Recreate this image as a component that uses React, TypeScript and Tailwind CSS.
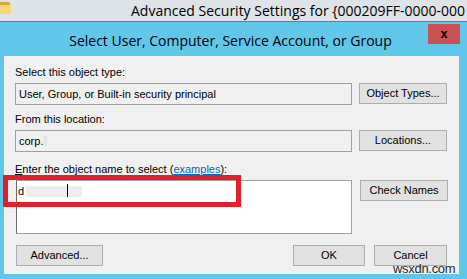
import React from "react";

const ui = { fontFamily: '"Liberation Sans", Arial, sans-serif' };
const chrome = { fontFamily: '"Open Sans", "Noto Sans", sans-serif' };

const Btn = ({ label, w }: { label: string; w: string }) => (
  <div
    className={`${w} h-[21px] flex items-center justify-center border border-[#adadad] bg-[#e1e1e1] text-[11px] text-black`}
  >
    {label}
  </div>
);

export default function App() {
  return (
    <div className="w-[467px] h-[279px] overflow-hidden flex flex-col relative" style={ui}>
      {/* parent window strip */}
      <div className="h-[22px] flex items-center bg-[#dde3e7] border-b border-[#707880] shrink-0 overflow-hidden">
        <svg width="12" height="16" viewBox="0 0 12 16" className="mt-[-6px] shrink-0">
          <rect x="-4" y="2" width="14" height="12" rx="1" fill="#d9a93c" />
          <rect x="-4" y="5" width="15" height="9" rx="1" fill="#f3d57c" />
        </svg>
        <span className="ml-[119px] shrink-0 text-[14px] text-black whitespace-nowrap" style={chrome}>
          Advanced Security Settings for {"{"}000209FF-0000-000
        </span>
      </div>

      {/* dialog */}
      <div className="flex-1 flex flex-col bg-[#60c6ea] pl-[4px] pr-[8px] pb-[5px]">
        <div className="h-[34px] flex items-start shrink-0 -mr-[8px] -ml-[4px]">
          <div
            className="flex-1 pl-[33px] pt-[8px] text-center text-[14px] text-black whitespace-nowrap"
            style={chrome}
          >
            Select User, Computer, Service Account, or Group
          </div>
          <div className="w-[32px] h-[20px] mt-[2px] mr-[7px] bg-[#c75050] flex items-center justify-center shrink-0">
            <span className="text-[12px] font-bold text-black leading-none" style={ui}>x</span>
          </div>
        </div>

        <div className="flex-1 bg-[#f0f0f0] pl-[11px] pr-[12px] pt-[10px] text-[11px] text-black">
          <div className="h-[13px] leading-[13px]">Select this object type:</div>
          <div className="mt-[4px] grid grid-cols-[337px_88px] gap-x-[7px]">
            <div className="h-[22px] border border-[#a0a0a0] bg-[#f0f0f0] flex items-center px-[3px]">
              User, Group, or Built-in security principal
            </div>
            <Btn label="Object Types..." w="w-[88px]" />
          </div>

          <div className="mt-[8px] h-[13px] leading-[13px]">From this location:</div>
          <div className="mt-[4px] grid grid-cols-[337px_88px] gap-x-[7px]">
            <div className="h-[22px] border border-[#a0a0a0] bg-[#f0f0f0] flex items-center px-[3px]">
              corp.
              <span className="ml-[1px] w-[3px] h-[10px] bg-[#e4e4e4]" />
            </div>
            <Btn label="Locations..." w="w-[88px]" />
          </div>

          <div className="mt-[11px] h-[13px] leading-[13px]">
            <span className="underline">E</span>nter the object name to select (
            <span className="text-[#0066cc] underline">examples</span>):
          </div>
          <div className="mt-[4px] grid grid-cols-[336px_88px] gap-x-[8px] ml-[1px]">
            <div className="h-[54px] border border-[#a0a0a0] border-l-[#6d6d6d] bg-white flex items-start px-[1px] pt-[4px]">
              <span className="leading-[13px]">d</span>
              <span className="ml-[2px] mt-[1px] w-[56px] h-[11px] bg-[#ededed] relative">
                <span className="absolute left-[41px] top-[-2px] w-px h-[13px] bg-black" />
              </span>
            </div>
            <div className="h-[21px]">
              <Btn label="Check Names" w="w-[88px]" />
            </div>
          </div>

          <div className="mt-[11px] flex items-center ml-[1px]">
            <Btn label="Advanced..." w="w-[87px]" />
            <div className="flex-1" />
            <Btn label="OK" w="w-[72px]" />
            <div className="w-[9px]" />
            <Btn label="Cancel" w="w-[73px]" />
          </div>
        </div>
      </div>

      {/* red highlight */}
      <div className="absolute left-[3px] top-[175px] w-[238px] h-[32px] border-[5px] border-[#e2202b]" />
      {/* watermark */}
      <div className="absolute left-[393px] top-[262px] text-[13px] leading-[14px] text-[#2a2a2a] tracking-[-0.3px]">
        wsxdn.com
      </div>
    </div>
  );
}
